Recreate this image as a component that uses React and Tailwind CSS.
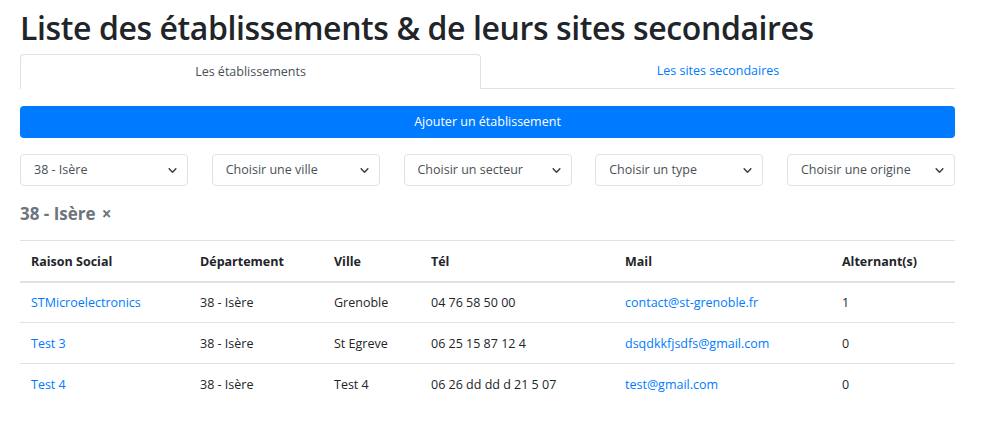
import React from 'react';

const filters = [
    'Choisir une ville',
    'Choisir un secteur',
    'Choisir un type',
    'Choisir une origine'
];

const rows = [
    { name: 'STMicroelectronics', dep: '38 - Isère', ville: 'Grenoble', tel: '04 76 58 50 00', mail: 'contact@st-grenoble.fr', alt: 1 },
    { name: 'Test 3', dep: '38 - Isère', ville: 'St Egreve', tel: '06 25 15 87 12 4', mail: 'dsqdkkfjsdfs@gmail.com', alt: 0 },
    { name: 'Test 4', dep: '38 - Isère', ville: 'Test 4', tel: '06 26 dd dd d 21 5 07', mail: 'test@gmail.com', alt: 0 }
];

const Chevron = () => (
    <svg width="9" height="9" viewBox="0 0 16 16" className="shrink-0">
        <path d="M2 5l6 6 6-6" fill="none" stroke="#343a40" strokeWidth="2.6" strokeLinecap="round" strokeLinejoin="round" />
    </svg>
);

const Select = ({ label }) => (
    <div className="h-[32px] w-[168px] border border-[#dee2e6] rounded-[4px] bg-white flex items-center justify-between pl-[13px] pr-[10px]">
        <span className="text-[#495057]">{label}</span>
        <Chevron />
    </div>
);

const App = () => {
    return (
        <div className="min-h-screen bg-white text-[13px] text-[#212529]" style={{ fontFamily: '"Open Sans", "Noto Sans", sans-serif' }}>
            <div className="w-[935px] ml-[20px] pt-[6px]">
                {/* Title */}
                <h1 className="text-[32px] font-semibold leading-[44px] text-[#212529] tracking-[-0.4px]">
                    Liste des établissements &amp; de leurs sites secondaires
                </h1>

                {/* Tabs */}
                <div className="flex mt-[4px] h-[35px]">
                    <div className="w-[461px] border border-[#dee2e6] border-b-0 rounded-t-[4px] flex items-center justify-center text-[#495057] text-[12.5px]">
                        Les établissements
                    </div>
                    <div className="flex-1 border-b border-[#dee2e6] flex items-center justify-center text-[#007bff] text-[12.5px]">
                        Les sites secondaires
                    </div>
                </div>

                {/* Add button */}
                <div className="mt-[17px] h-[32px] bg-[#007bff] rounded-[4px] flex items-center justify-center text-white text-[12.5px]">
                    Ajouter un établissement
                </div>

                {/* Filters */}
                <div className="mt-[16px] flex justify-between text-[12.5px]">
                    <Select label="38 - Isère" />
                    {filters.map((f) => (
                        <Select key={f} label={f} />
                    ))}
                </div>

                {/* Selected filter */}
                <div className="mt-[17px] h-[22px] flex items-center text-[17px] font-bold text-[#6c757d]">
                    38 - Isère <span className="ml-[6px] font-bold">×</span>
                </div>

                {/* Table */}
                <table className="mt-[15px] w-full border-collapse text-[12.5px]">
                    <thead>
                        <tr className="h-[41px] border-t border-b-2 border-[#dee2e6] text-left">
                            <th className="pl-[11px] pt-[3px] w-[180px] font-bold">Raison Social</th>
                            <th className="pt-[3px] w-[134px] font-bold">Département</th>
                            <th className="pt-[3px] w-[97px] font-bold">Ville</th>
                            <th className="pt-[3px] w-[194px] font-bold">Tél</th>
                            <th className="pt-[3px] w-[217px] font-bold">Mail</th>
                            <th className="pt-[3px] font-bold">Alternant(s)</th>
                        </tr>
                    </thead>
                    <tbody>
                        {rows.map((r, i) => (
                            <tr key={r.name} className={i < rows.length - 1 ? 'h-[41px] border-b border-[#dee2e6]' : 'h-[41px]'}>
                                <td className="pl-[11px] pt-[2px] text-[#007bff]">{r.name}</td>
                                <td className="pt-[2px]">{r.dep}</td>
                                <td className="pt-[2px]">{r.ville}</td>
                                <td className="pt-[2px]">{r.tel}</td>
                                <td className="pt-[2px] text-[#007bff]">{r.mail}</td>
                                <td className="pt-[2px]">{r.alt}</td>
                            </tr>
                        ))}
                    </tbody>
                </table>
            </div>
        </div>
    );
};

export default App;
